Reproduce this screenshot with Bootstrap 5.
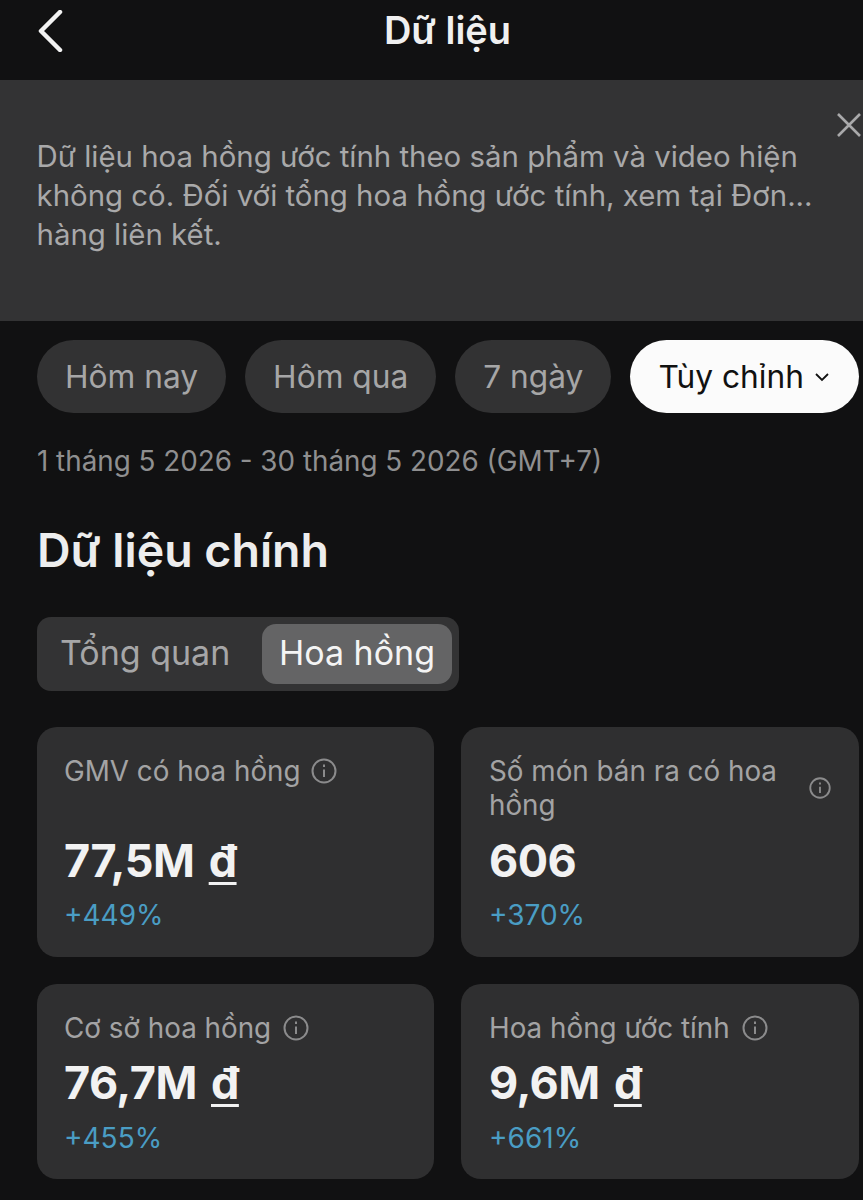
<!DOCTYPE html>
<html lang="vi">
  <head>
    <meta charset="UTF-8" />
    <meta name="viewport" content="width=device-width, initial-scale=1.0" />
    <title>Dữ liệu</title>
    <link href="https://cdn.jsdelivr.net/npm/bootstrap@5.3.2/dist/css/bootstrap.min.css" rel="stylesheet" />
    <style>
      body {
        background: #111112;
        font-family: Inter, "Noto Sans", sans-serif;
        overflow: hidden;
        height: 1200px;
      }
      .top-bar {
        height: 80px;
        padding-left: 32px;
        padding-bottom: 20px;
      }
      .top-title {
        font-size: 38px;
        font-weight: 600;
        color: #f0f0f0;
        line-height: 1;
        margin: 0;
      }
      .back-btn {
        left: 38px;
        top: 10px;
      }
      .notice {
        height: 241px;
        background: #333334;
        padding: 57px 36.5px 0;
        color: #a9a9aa;
        font-size: 29.4px;
        line-height: 39px;
      }
      .notice-close {
        right: 2px;
        top: 33px;
      }
      .page-body {
        padding: 19px 4px 0 37px;
      }
      .pill-row {
        gap: 19px;
      }
      .range-pill {
        height: 73px;
        padding: 0 28px;
        border-radius: 37px;
        background: #323233;
        color: #a6a6a7;
        font-size: 31.7px;
        white-space: nowrap;
      }
      .range-pill.is-on {
        background: #fbfbfb;
        color: #111;
        flex-grow: 1;
      }
      .pill-caret {
        margin-left: 10px;
      }
      .date-line {
        margin-top: 30px;
        color: #8f8f90;
        font-size: 27.8px;
        line-height: 36px;
      }
      .main-title {
        margin: 46px 0 0;
        font-size: 46.5px;
        line-height: 50px;
        font-weight: 600;
        color: #ededed;
      }
      .switcher {
        margin-top: 42px;
        width: 422px;
        height: 74px;
        padding: 7px;
        border-radius: 14px;
        background: #333334;
        font-size: 34px;
      }
      .switch-off {
        width: 218px;
        padding: 0 0 4px 16px;
        color: #a6a6a7;
      }
      .switch-on {
        width: 190px;
        padding-bottom: 4px;
        background: #646465;
        color: #f4f4f4;
        border-radius: 14px;
      }
      .stat-grid {
        margin-top: 36px;
        display: grid;
        grid-template-columns: 397px 398px;
        grid-template-rows: 230px 195px;
        column-gap: 27px;
        row-gap: 27px;
      }
      .stat-tile {
        background: #2f2f30;
        border-radius: 20px;
        padding: 27px 28px 0 27px;
      }
      .tile-right {
        padding-left: 28px;
      }
      .stat-name {
        color: #a3a3a4;
        font-size: 27.8px;
        line-height: 34px;
        gap: 10px;
      }
      .stat-name svg {
        flex: none;
      }
      .name-tall {
        height: 68px;
      }
      .name-short {
        height: 34px;
        gap: 12px;
      }
      .stat-num {
        margin-top: 11px;
        color: #f2f2f2;
        font-size: 45px;
        line-height: 56px;
        font-weight: 700;
        letter-spacing: -0.5px;
      }
      .stat-num u {
        text-underline-offset: 5px;
        text-decoration-thickness: 3px;
        margin-left: 4px;
      }
      .stat-delta {
        margin-top: 9px;
        color: #4a9dc4;
        font-size: 28px;
        line-height: 34px;
      }
      .tile-low .stat-num {
        margin-top: 10px;
      }
      .tile-low .stat-delta {
        margin-top: 10px;
      }
    </style>
  </head>
  <body>
    <div class="top-bar position-relative d-flex align-items-center justify-content-center">
      <svg class="back-btn position-absolute" width="26" height="42" viewBox="0 0 26 42" fill="none" stroke="#f2f2f2" stroke-width="4.5" stroke-linecap="round" stroke-linejoin="round"><path d="M22 2 3 21l19 19" /></svg>
      <h1 class="top-title">Dữ liệu</h1>
    </div>

    <div class="notice position-relative">
      <svg class="notice-close position-absolute" width="24" height="24" viewBox="0 0 24 24" fill="none" stroke="#a9a9aa" stroke-width="2.6"><path d="M1 1l22 22M23 1 1 23" /></svg>
      Dữ liệu hoa hồng ước tính theo sản phẩm và video hiện<br />
      không có. Đối với tổng hoa hồng ước tính, xem tại Đơn...<br />
      hàng liên kết.
    </div>

    <div class="page-body">
      <div class="pill-row d-flex">
        <div class="range-pill d-flex align-items-center">Hôm nay</div>
        <div class="range-pill d-flex align-items-center">Hôm qua</div>
        <div class="range-pill d-flex align-items-center">7 ngày</div>
        <div class="range-pill is-on d-flex align-items-center">
          Tùy chỉnh
          <svg class="pill-caret" width="16" height="10" viewBox="0 0 16 10" fill="none" stroke="#111" stroke-width="1.8"><path d="M2 2l6 6 6-6" /></svg>
        </div>
      </div>

      <div class="date-line">1 tháng 5 2026 - 30 tháng 5 2026 (GMT+7)</div>
      <h2 class="main-title">Dữ liệu chính</h2>

      <div class="switcher d-flex align-items-stretch">
        <div class="switch-off d-flex align-items-center">Tổng quan</div>
        <div class="switch-on d-flex align-items-center justify-content-center">Hoa hồng</div>
      </div>

      <div class="stat-grid">
        <div class="stat-tile">
          <div class="stat-name name-tall d-flex align-items-start">
            <span>GMV có hoa hồng</span>
            <svg class="mt-1" width="26" height="26" viewBox="0 0 26 26" fill="none" stroke="#8b8b8c" stroke-width="2"><circle cx="13" cy="13" r="11.5" /><path d="M13 11.5v7.5M13 6.5v2.5" /></svg>
          </div>
          <div class="stat-num">77,5M <u>đ</u></div>
          <div class="stat-delta">+449%</div>
        </div>
        <div class="stat-tile tile-right">
          <div class="stat-name name-tall d-flex align-items-center justify-content-between">
            <span>Số món bán ra có hoa<br />hồng</span>
            <svg width="22" height="22" viewBox="0 0 26 26" fill="none" stroke="#8b8b8c" stroke-width="2.2"><circle cx="13" cy="13" r="11.5" /><path d="M13 11.5v7.5M13 6.5v2.5" /></svg>
          </div>
          <div class="stat-num">606</div>
          <div class="stat-delta">+370%</div>
        </div>
        <div class="stat-tile tile-low">
          <div class="stat-name name-short d-flex align-items-start">
            <span>Cơ sở hoa hồng</span>
            <svg class="mt-1" width="26" height="26" viewBox="0 0 26 26" fill="none" stroke="#8b8b8c" stroke-width="2"><circle cx="13" cy="13" r="11.5" /><path d="M13 11.5v7.5M13 6.5v2.5" /></svg>
          </div>
          <div class="stat-num">76,7M <u>đ</u></div>
          <div class="stat-delta">+455%</div>
        </div>
        <div class="stat-tile tile-low tile-right">
          <div class="stat-name name-short d-flex align-items-start">
            <span>Hoa hồng ước tính</span>
            <svg class="mt-1" width="26" height="26" viewBox="0 0 26 26" fill="none" stroke="#8b8b8c" stroke-width="2"><circle cx="13" cy="13" r="11.5" /><path d="M13 11.5v7.5M13 6.5v2.5" /></svg>
          </div>
          <div class="stat-num">9,6M <u>đ</u></div>
          <div class="stat-delta">+661%</div>
        </div>
      </div>
    </div>

    <script src="https://cdn.jsdelivr.net/npm/bootstrap@5.3.2/dist/js/bootstrap.bundle.min.js"></script>
  </body>
</html>
